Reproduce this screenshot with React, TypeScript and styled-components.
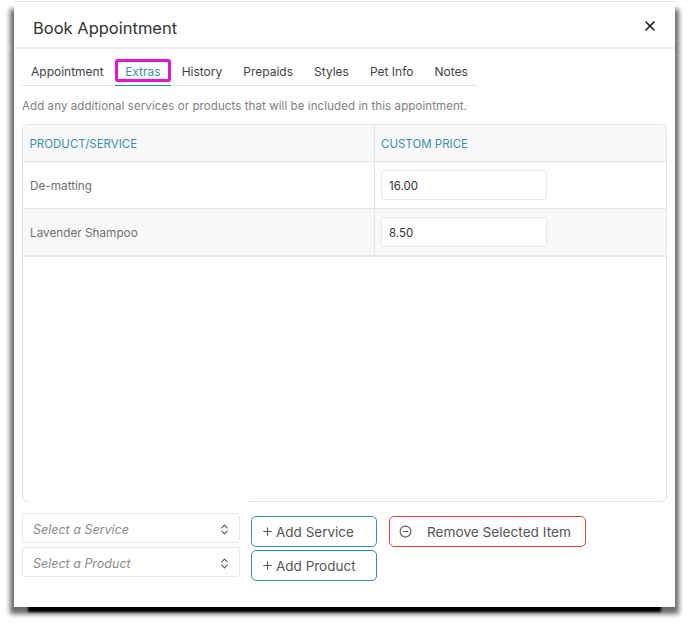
import React from "react";
import styled, { createGlobalStyle } from "styled-components";
import { LuChevronsUpDown, LuCircleMinus, LuPlus, LuX } from "react-icons/lu";

const GlobalStyle = createGlobalStyle`
  html, body {
    margin: 0;
    padding: 0;
    background: #fff;
  }
  body {
    font-family: Inter, "Noto Sans", sans-serif;
    color: #444;
  }
`;

const Page = styled.div`
  isolation: isolate;
  width: 688px;
  height: 634px;
  padding: 1px 13px 0 14px;
  box-sizing: border-box;
  overflow: hidden;
`;

const Modal = styled.div`
  position: relative;
  height: 606px;
  background: #fff;
  border-top: 1px solid #e6e6e6;
  box-sizing: border-box;
  display: flex;
  flex-direction: column;
  &::before {
    content: "";
    position: absolute;
    z-index: -2;
    top: 7px;
    left: -4px;
    right: -4px;
    bottom: -7px;
    background: #6a6a6a;
    filter: blur(2.5px);
  }
  &::after {
    content: "";
    position: absolute;
    z-index: -1;
    left: 14px;
    right: 14px;
    bottom: -5px;
    height: 7px;
    background: #000;
    filter: blur(1px);
  }
`;

const Header = styled.header`
  height: 47px;
  flex: none;
  box-sizing: border-box;
  border-bottom: 2px solid #eceef0;
  padding: 6px 19px 0 19px;
  display: flex;
  align-items: center;
  justify-content: space-between;
`;

const Title = styled.h2`
  margin: 0;
  font-size: 16.5px;
  font-weight: 400;
  color: #333;
`;

const CloseButton = styled.button`
  border: 0;
  background: none;
  padding: 0;
  display: flex;
  color: #222;
  font-size: 16px;
  margin-top: -3px;
  margin-right: -2px;
`;

const Body = styled.div`
  flex: 1;
  padding: 0 8px;
  display: flex;
  flex-direction: column;
`;

const Tabs = styled.nav`
  width: 456px;
  height: 37px;
  flex: none;
  box-sizing: border-box;
  border-bottom: 1px solid #e3e5e8;
  display: flex;
  align-items: stretch;
`;

const Tab = styled.div<{ $active?: boolean }>`
  position: relative;
  flex: none;
  display: flex;
  align-items: center;
  padding: 9px 10.5px 0;
  box-sizing: border-box;
  font-size: 12px;
  color: ${(p) => (p.$active ? "#3b8ea8" : "#444")};
  border-bottom: ${(p) => (p.$active ? "1px solid #3b8ea8" : "0")};
  margin-bottom: ${(p) => (p.$active ? "-1px" : "0")};
  &:first-child {
    padding-left: 9px;
    padding-right: 11px;
  }
`;

const FocusRing = styled.span`
  position: absolute;
  left: 0;
  right: 0;
  top: 10px;
  height: 22.5px;
  box-sizing: border-box;
  border: 3px solid #e815d0;
  border-radius: 3px;
`;

const Hint = styled.p`
  margin: 0;
  height: 38px;
  flex: none;
  padding-top: 2px;
  box-sizing: border-box;
  display: flex;
  align-items: center;
  font-size: 11.5px;
  color: #808080;
  letter-spacing: 0.09px;
`;

const TableCard = styled.div`
  position: relative;
  height: 378px;
  flex: none;
  box-sizing: border-box;
  border: 1px solid #e2e4e7;
  border-radius: 6px;
  &::after {
    content: "";
    position: absolute;
    left: 6px;
    bottom: -2px;
    width: 220px;
    height: 3px;
    background: #fff;
  }
`;

const Row = styled.div<{ $kind?: "head" | "odd" | "even" }>`
  display: grid;
  grid-template-columns: 351px 1fr;
  height: ${(p) => (p.$kind === "head" ? "36.5px" : "47.5px")};
  box-sizing: border-box;
  border-bottom: ${(p) =>
    p.$kind === "even" ? "2px solid #e8e9eb" : "1px solid #e4e5e8"};
  background: ${(p) =>
    p.$kind === "head" ? "#f7f8fa" : p.$kind === "even" ? "#f8f8f8" : "#fff"};
  border-radius: ${(p) => (p.$kind === "head" ? "6px 6px 0 0" : "0")};
`;

const Cell = styled.div`
  display: flex;
  align-items: center;
  padding-left: 7px;
  font-size: 11.75px;
  color: #707070;
  & + & {
    border-left: 1px solid #e2e4e7;
    padding-left: 6px;
  }
`;

const TextCell = styled(Cell)`
  padding-top: 2px;
`;

const HeadCell = styled(Cell)`
  color: #3f8fa9;
  font-size: 11.5px;
  padding-left: 6.5px;
  padding-top: 3px;
`;

const PriceInput = styled.input`
  width: 166px;
  height: 30px;
  box-sizing: border-box;
  border: 1px solid #e8e9ec;
  border-radius: 3px;
  background: #fff;
  padding: 2px 7px 0;
  font: 400 11.5px Inter, sans-serif;
  color: #333;
`;

const Footer = styled.div`
  display: grid;
  grid-template-columns: 218px 126px 198px;
  column-gap: 11px;
  padding-top: 11px;
  align-items: start;
`;

const SelectStack = styled.div`
  display: flex;
  flex-direction: column;
  gap: 4px;
`;

const SelectBox = styled.div`
  height: 30px;
  box-sizing: border-box;
  border: 1px solid #e8e9ec;
  border-radius: 3px;
  padding: 2px 8px 0 10px;
  display: flex;
  align-items: center;
  justify-content: space-between;
  font-size: 12.5px;
  font-style: italic;
  color: #8a8a8a;
  svg {
    font-size: 13px;
    color: #555;
  }
`;

const ButtonStack = styled.div`
  display: flex;
  flex-direction: column;
  gap: 3px;
  padding-top: 3px;
`;

const ActionButton = styled.button<{ $danger?: boolean }>`
  height: 31px;
  width: 100%;
  box-sizing: border-box;
  background: #fff;
  border: 1px solid ${(p) => (p.$danger ? "#d9473c" : "#3c8ea8")};
  border-radius: 5px;
  padding: 0 0 0 9px;
  display: flex;
  align-items: center;
  gap: ${(p) => (p.$danger ? "15px" : "2px")};
  font: 400 ${(p) => (p.$danger ? "13.65px" : "13.5px")} Inter, sans-serif;
  color: #555;
  white-space: nowrap;
`;

const RemoveSlot = styled.div`
  padding: 3px 0 0 1px;
`;

const tabs = [
  { label: "Appointment" },
  { label: "Extras", active: true },
  { label: "History" },
  { label: "Prepaids" },
  { label: "Styles" },
  { label: "Pet Info" },
  { label: "Notes" },
];

export default function App() {
  return (
    <Page>
      <GlobalStyle />
      <Modal>
        <Header>
          <Title>Book Appointment</Title>
          <CloseButton aria-label="Close">
            <LuX strokeWidth={2.6} />
          </CloseButton>
        </Header>
        <Body>
          <Tabs>
            {tabs.map((t) => (
              <Tab key={t.label} $active={t.active}>
                {t.label}
                {t.active && <FocusRing />}
              </Tab>
            ))}
          </Tabs>
          <Hint>Add any additional services or products that will be included in this appointment.</Hint>
          <TableCard>
            <Row $kind="head">
              <HeadCell>PRODUCT/SERVICE</HeadCell>
              <HeadCell>CUSTOM PRICE</HeadCell>
            </Row>
            <Row $kind="odd">
              <TextCell>De-matting</TextCell>
              <Cell>
                <PriceInput defaultValue="16.00" />
              </Cell>
            </Row>
            <Row $kind="even">
              <TextCell>Lavender Shampoo</TextCell>
              <Cell>
                <PriceInput defaultValue="8.50" />
              </Cell>
            </Row>
          </TableCard>
          <Footer>
            <SelectStack>
              <SelectBox>
                Select a Service
                <LuChevronsUpDown />
              </SelectBox>
              <SelectBox>
                Select a Product
                <LuChevronsUpDown />
              </SelectBox>
            </SelectStack>
            <ButtonStack>
              <ActionButton>
                <LuPlus size={13} />
                Add Service
              </ActionButton>
              <ActionButton>
                <LuPlus size={13} />
                Add Product
              </ActionButton>
            </ButtonStack>
            <RemoveSlot>
              <ActionButton $danger>
                <LuCircleMinus size={13} />
                Remove Selected Item
              </ActionButton>
            </RemoveSlot>
          </Footer>
        </Body>
      </Modal>
    </Page>
  );
}
